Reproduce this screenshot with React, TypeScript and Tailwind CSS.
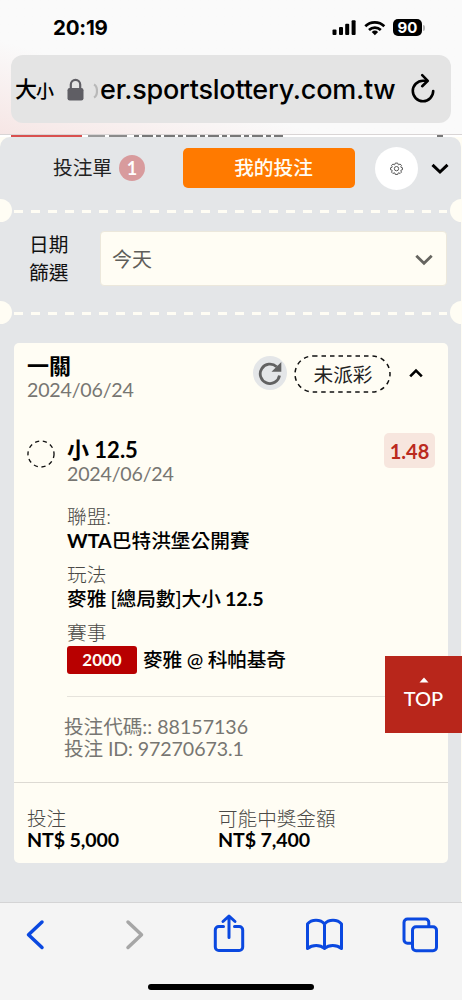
import type { ReactNode } from "react";

function StatusBar() {
  return (
    <div className="flex h-[55px] items-center justify-between pl-[53px] pr-[37px]">
      <span className="font-['Inter'] text-[20.5px] font-bold leading-6 tracking-[-0.2px]">20:19</span>
      <div className="flex items-center">
        <svg width="25" height="15" viewBox="0 0 25 15" fill="#000">
          <rect x="0.5" y="9.5" width="4" height="5.5" rx="1" />
          <rect x="7" y="7" width="4" height="8" rx="1" />
          <rect x="13.2" y="3.8" width="4" height="11.2" rx="1" />
          <rect x="19.6" y="0.2" width="4" height="14.8" rx="1" />
        </svg>
        <svg width="22" height="16" viewBox="0 0 22 16" fill="none" stroke="#000" strokeWidth="2.7" className="ml-[7px]">
          <path d="M1.3 6.3a13.6 13.6 0 0 1 19 0" />
          <path d="M5 9.900a8.600 8.600 0 0 1 11.800 0" />
          <path d="M10.900 15.200l-3.200-3.200a4.800 4.800 0 0 1 6.400 0z" fill="#000" stroke="none" />
        </svg>
        <div className="ml-[7px] flex h-[17px] w-[29px] items-center justify-center rounded-[5px] bg-black font-['Inter'] text-[15px] font-bold leading-none text-white">
          90
        </div>
        <div className="ml-px h-[6px] w-[2px] rounded-r-full bg-[#b5b5b5]" />
      </div>
    </div>
  );
}

function AddressBar() {
  return (
    <div className="ml-[11px] flex h-[68px] w-[440px] items-center rounded-[12px] bg-[#e4e4e4] pl-[4px]">
      <span className="w-[21px] text-[22px] font-medium leading-none">大</span>
      <span className="w-[19px] pt-[4px] text-[18px] font-medium leading-none">小</span>
      <svg width="17" height="23" viewBox="0 0 17 23" className="ml-[12px]">
        <rect x="0.5" y="10" width="16" height="12.5" rx="2.2" fill="#5f5e64" />
        <path d="M3.8 11V6.6a4.7 4.7 0 0 1 9.4 0V11" fill="none" stroke="#5f5e64" strokeWidth="2.2" />
      </svg>
      <svg width="5" height="16" viewBox="0 0 5 16" className="ml-[9px] mt-[3px]">
        <path d="M1 1.5c4 2 4 11 0 13" fill="none" stroke="#b9b9b9" strokeWidth="2.2" />
      </svg>
      <span className="ml-[2px] mt-[2px] w-[298px] whitespace-nowrap font-['Inter'] text-[27px] font-medium leading-8 tracking-[-0.22px]">
        er.sportslottery.com.tw
      </span>
      <svg width="26" height="30" viewBox="0 0 26 30" fill="none" stroke="#000" strokeWidth="2.6" strokeLinecap="round" strokeLinejoin="round" className="ml-[12px] -mt-[3px]">
        <path d="M16.5 7.8H13a10.2 10.2 0 1 0 10.2 10.2" />
        <path d="M12.2 2.2l5.6 5.6-5.6 5.4" />
      </svg>
    </div>
  );
}

function Perforation() {
  return (
    <div className="flex h-[23px] items-center">
      <div className="h-[23px] w-[12px] rounded-r-full bg-[#fffdf4]" />
      <div className="ml-[2px] mt-[2px] h-[3px] w-[434px] bg-[repeating-linear-gradient(90deg,#fffdf4_0_9px,transparent_9px_17px)]" />
      <div className="ml-[3px] h-[23px] w-[12px] rounded-l-full bg-[#fffdf4]" />
    </div>
  );
}

function TabRow() {
  return (
    <div className="flex h-[62px] items-center pl-[53px]">
      <span className="w-[66px] whitespace-nowrap text-[19.7px] leading-6 text-[#222]">投注單</span>
      <span className="flex h-[26px] w-[26px] items-center justify-center rounded-full bg-[#d89b9d] text-[18px] font-bold leading-none text-white">
        1
      </span>
      <div className="ml-[38px] flex h-[40px] w-[172px] items-center justify-center rounded-[5px] bg-[#ff7a00] pl-[9px] text-[19.7px] font-medium text-[#fffdf4]">
        我的投注
      </div>
      <div className="ml-[20px] flex h-[43px] w-[43px] items-center justify-center rounded-full bg-white">
        <svg width="13" height="13" viewBox="0 0 24 24" fill="none" stroke="#555" strokeWidth="1.8" strokeLinejoin="round">
          <path d="M9.7 2h4.6l.7 2.6 1.2.5 2.4-1.4 2.6 2.6-1.3 2.5.5 1.2 2.6.7v3.6l-2.6.7-.5 1.2 1.3 2.5-2.6 2.6-2.4-1.4-1.2.5-.7 2.6H9.7L9 20.4l-1.2-.5-2.4 1.4-2.6-2.6 1.3-2.5-.5-1.2-2.6-.7v-3.6l2.6-.7.5-1.2-1.3-2.5 2.6-2.6 2.4 1.4L9 4.6z" />
          <circle cx="12" cy="12.3" r="4" />
        </svg>
      </div>
      <svg width="18" height="12" viewBox="0 0 18 12" fill="none" stroke="#000" strokeWidth="3" className="ml-[13px] mt-[2px]">
        <path d="M1.5 1.8L9 9l7.5-7.2" />
      </svg>
    </div>
  );
}

function DateFilter() {
  return (
    <div className="flex h-[79px] items-start pl-[29px] pt-[9px]">
      <div className="w-[71px] text-[19.7px] leading-[28px] text-[#111]">
        <div>日期</div>
        <div>篩選</div>
      </div>
      <div className="flex h-[55px] w-[347px] items-center justify-between rounded-[4px] border border-[#ece8dc] bg-[#fffdf4] pl-[11px] pr-[13px]">
        <span className="text-[20px] text-[#5f5e5a]">今天</span>
        <svg width="18" height="12" viewBox="0 0 18 12" fill="none" stroke="#666560" strokeWidth="2.8" className="mt-[2px]">
          <path d="M1.3 1.8L9 9.2l7.7-7.4" />
        </svg>
      </div>
    </div>
  );
}

function Detail({ label, children }: { label: string; children: ReactNode }) {
  return (
    <div className="mb-[10px]">
      <div className="text-[19.7px] font-light leading-6 text-[#4a4946]">{label}</div>
      <div className="flex h-6 items-center whitespace-pre text-[19.7px] font-medium leading-6">{children}</div>
    </div>
  );
}

function BetCard() {
  return (
    <div className="ml-[14px] mt-[19px] h-[520px] w-[434px] rounded-[5px] bg-[#fffdf4]">
      <div className="flex h-[72px] items-start pl-[13px]">
        <div className="w-[226px] pt-[11px]">
          <div className="text-[22px] font-semibold leading-6">一關</div>
          <div className="text-[19.6px] leading-6 tracking-[-0.2px] text-[#777672]">2024/06/24</div>
        </div>
        <div className="mt-[13px] flex h-[34px] w-[34px] items-center justify-center rounded-full bg-[#e4e6e8]">
          <svg width="24" height="24" viewBox="0 0 24 24">
            <path d="M18.6 5.8A9.7 9.7 0 1 0 21.5 14.5" fill="none" stroke="#626262" strokeWidth="2.8" />
            <path d="M23.3 1v9.8H13.5z" fill="#626262" />
          </svg>
        </div>
        <div className="relative ml-[7px] mt-[12px] flex h-[38px] w-[98px] items-center justify-center">
          <svg width="98" height="38" className="absolute inset-0" fill="none" stroke="#111" strokeWidth="1.5" strokeDasharray="4.5 4">
            <rect x="1" y="1" width="95" height="36" rx="18" />
          </svg>
          <span className="pt-[2px] text-[19.7px] text-[#222]">未派彩</span>
        </div>
        <svg width="14" height="10" viewBox="0 0 14 10" fill="none" stroke="#000" strokeWidth="2.6" className="ml-[17px] mt-[25px]">
          <path d="M1.2 8.3L7 2.5l5.8 5.8" />
        </svg>
      </div>

      <div className="flex h-[90px] items-start pl-[13px] pt-[23px]">
        <svg width="28" height="28" viewBox="0 0 29 29" className="mt-[2px]" fill="none" stroke="#111" strokeWidth="1.4" strokeDasharray="4.3 3.84">
          <circle cx="14.5" cy="14.5" r="13.5" />
        </svg>
        <div className="ml-[12px] w-[317px]">
          <div className="text-[22px] font-bold leading-6">
            <span className="font-semibold">小</span> 12.5
          </div>
          <div className="text-[19.6px] leading-6 tracking-[-0.2px] text-[#777672]">2024/06/24</div>
        </div>
        <div className="-mt-[5px] flex h-[35px] w-[51px] items-center justify-center rounded-[5px] bg-[#f7e6de] text-[20px] font-bold text-[#bb2a1e]">
          1.48
        </div>
      </div>

      <div className="h-[191px] pl-[53px]">
        <Detail label="聯盟:">
          <span className="font-bold">WTA</span>巴特洪堡公開賽
        </Detail>
        <Detail label="玩法">
          <span>麥雅</span>
          <span className="ml-[4px]">[總局數]大小</span>
          <span className="ml-[4px] font-bold tracking-[-0.1px]">12.5</span>
        </Detail>
        <Detail label="賽事">
          <span className="mr-[6px] mt-[5px] flex h-[28px] w-[70px] items-center justify-center rounded-[3px] bg-[#b80000] text-[17px] font-bold text-[#fffdf4]">
            2000
          </span>
          <span className="mt-[6px] tracking-[-0.2px]">麥雅 @ 科帕基奇</span>
        </Detail>
      </div>

      <div className="ml-[53px] h-[86px] border-t-[1.5px] border-[#e6e3dc] pt-[19px]">
        <div className="-ml-[3px] text-[19.6px] leading-[21.5px] text-[#777672]">
          <div>投注代碼:: 88157136</div>
          <div className="tracking-[-0.1px]">投注 ID: 97270673.1</div>
        </div>
      </div>

      <div className="flex border-t border-[#dddad3] pl-[13px] pt-[25px] text-[19.6px] leading-[21px]">
        <div className="w-[191px]">
          <div className="font-light text-[#4a4946]">投注</div>
          <div className="font-bold tracking-[-0.1px]">NT$ 5,000</div>
        </div>
        <div>
          <div className="font-light text-[#4a4946]">可能中獎金額</div>
          <div className="font-bold tracking-[-0.1px]">NT$ 7,400</div>
        </div>
      </div>
    </div>
  );
}

function Toolbar() {
  return (
    <div className="flex h-[98px] flex-col items-center border-t border-[#d4d4d5] bg-[#f4f4f4]">
      <svg width="462" height="80" viewBox="0 903 462 80" fill="none" stroke="#0a48e0" strokeWidth="3" strokeLinecap="round" strokeLinejoin="round">
        <path d="M42 922L28.5 934.7 42 947.5" strokeWidth="3.5" />
        <path d="M128 922l13.5 12.7L128 947.5" stroke="#a6a6a6" strokeWidth="3.5" />
        <path d="M223.5 926.5h-4.7a3.5 3.5 0 0 0-3.5 3.5v17a3.5 3.5 0 0 0 3.5 3.5h20.4a3.5 3.5 0 0 0 3.5-3.5v-17a3.5 3.5 0 0 0-3.5-3.5h-4.7" />
        <path d="M229 937.5V916.5M223 921.5l6-5.5 6 5.5" />
        <path d="M324.5 924v24.5c-4.500-4-12-4-17 0V924c4-5 13-5 17 0c4-5 13-5 17 0v24.500c-5-4-12.500-4-17 0" />
        <rect x="412.5" y="926.8" width="24" height="24" rx="3.5" />
        <path d="M411 943.3h-3.5a3.5 3.5 0 0 1-3.5-3.5v-17.3a3.5 3.5 0 0 1 3.5-3.5h17.8a3.5 3.5 0 0 1 3.5 3.5v3" />
      </svg>
      <div className="mt-[1px] h-[6px] w-[166px] rounded-full bg-black" />
    </div>
  );
}

export default function App() {
  return (
    <div className="relative flex h-[1000px] w-[462px] flex-col overflow-hidden bg-[#fffdf4] font-['Lato','Noto_Sans_CJK_TC',sans-serif] text-black">
      <div className="h-[135px] shrink-0 border-b border-[#d9d5d5] bg-linear-to-tr from-[#f6e6e5] via-[#fafafa] via-35% to-[#fafafa]">
        <StatusBar />
        <AddressBar />
      </div>
      {/* sliver of the site header left visible above the slip panel */}
      <div className="flex h-[2px] shrink-0 bg-white pl-[11px]">
        <div className="w-[71px] bg-[#d9504f]" />
        <div className="ml-[6px] w-[17px] bg-[#9a9a9a]" />
        <div className="ml-[4px] w-[18px] bg-[#8a8a8a]" />
        <div className="ml-[7px] w-[149px] bg-[repeating-linear-gradient(90deg,#777_0_5px,#fff_5px_8px,#777_8px_19px,#fff_19px_22px)]" />
        <div className="ml-[154px] w-[6px] bg-[#777]" />
      </div>

      <div className="h-[765px] w-[461px] shrink-0 rounded-t-[10px] bg-[#e4e6e8]">
        <TabRow />
        <div className="w-[462px]">
          <Perforation />
          <DateFilter />
          <Perforation />
        </div>
        <BetCard />
      </div>

      <Toolbar />

      <div className="absolute right-0 top-[656px] flex h-[77px] w-[77px] flex-col items-center bg-[#b8261b] pt-[21px] text-white">
        <svg width="10" height="6" viewBox="0 0 10 6">
          <path d="M0.5 5.5L5 0.5l4.5 5z" fill="#fff" />
        </svg>
        <span className="mt-[3px] text-[20px] font-medium leading-6">TOP</span>
      </div>
    </div>
  );
}
